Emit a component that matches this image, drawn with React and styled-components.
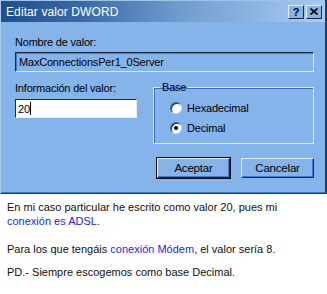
import React from "react";
import styled, { createGlobalStyle } from "styled-components";

const Global = createGlobalStyle`
  html, body { margin: 0; padding: 0; background: #ffffff; }
  body { font-family: "Liberation Sans", Arial, sans-serif; }
`;

const Page = styled.div`
  width: 327px;
  height: 294px;
  overflow: hidden;
  background: #fff;
`;

const Dialog = styled.div`
  width: 327px;
  height: 194px;
  box-sizing: border-box;
  background: #84b4ea;
  border-left: 1px solid #a9cdf5;
  border-right: 2px solid #2e3a4a;
  border-bottom: 1px solid #2e3440;
  box-shadow: inset 0 -1px 0 #3a7ad0;
  display: flex;
  flex-direction: column;
  font-family: "Liberation Sans", Arial, sans-serif;
  font-size: 11px;
  letter-spacing: -0.2px;
  color: #000;
`;

const TitleBar = styled.div`
  height: 22px;
  display: flex;
  align-items: center;
  justify-content: space-between;
  padding: 0 3px 0 5px;
  background: linear-gradient(90deg, #1d4f8e 0%, #3a6aa6 25%, #6f9ccd 55%, #a9cdf5 100%);
  border-top: 1px solid #9fc2ea;
  box-sizing: border-box;
`;

const Title = styled.span`
  color: #fff;
  font-size: 12px;
  letter-spacing: 0.1px;
`;

const TitleButtons = styled.div`
  display: flex;
  gap: 2px;
`;

const TitleBtn = styled.div`
  width: 16px;
  height: 14px;
  box-sizing: border-box;
  background: #84b4ea;
  border: 1px solid;
  border-color: #e6f0fc #1f2a38 #1f2a38 #e6f0fc;
  display: flex;
  align-items: center;
  justify-content: center;
  font-weight: bold;
  font-size: 11px;
  letter-spacing: 0;
  color: #000;
`;

const Content = styled.div`
  padding: 13px 10px 0 14px;
  display: flex;
  flex-direction: column;
`;

const Label = styled.div`
  line-height: 14px;
  height: 14px;
`;

const ReadField = styled.div`
  margin-top: 3px;
  width: 299px;
  height: 20px;
  box-sizing: border-box;
  border: 1px solid;
  border-color: #1c2c44 #dfeaf8 #dfeaf8 #1c2c44;
  box-shadow: inset 1px 1px 0 #3a7ad0;
  padding: 2px 3px;
  line-height: 14px;
  color: #000;
`;

const Row = styled.div`
  margin-top: 9px;
  display: flex;
  gap: 16px;
`;

const LeftCol = styled.div`
  display: flex;
  flex-direction: column;
`;

const InputBox = styled.div`
  margin-top: 4px;
  width: 122px;
  height: 19px;
  box-sizing: border-box;
  background: #fff;
  border: 1px solid;
  border-color: #1c2c44 #e8eef8 #e8eef8 #1c2c44;
  padding: 2px 2px;
  line-height: 14px;
  display: flex;
  align-items: center;
`;

const Caret = styled.span`
  display: inline-block;
  width: 1px;
  height: 13px;
  background: #000;
`;

const Group = styled.fieldset`
  margin: 0;
  width: 161px;
  height: 63px;
  box-sizing: border-box;
  border: 1px solid #e4eefa;
  box-shadow: inset 1px 1px 0 #2f6fc4;
  padding: 8px 0 0 0;
`;

const Legend = styled.legend`
  padding: 0 2px;
  margin-left: 6px;
  line-height: 12px;
`;

const RadioList = styled.div`
  display: flex;
  flex-direction: column;
  gap: 7px;
  padding-left: 16px;
`;

const RadioRow = styled.div`
  display: flex;
  align-items: center;
  gap: 5px;
  height: 13px;
`;

const RadioCircle = styled.span`
  width: 12px;
  height: 12px;
  box-sizing: border-box;
  border-radius: 50%;
  background: #fff;
  border: 1px solid;
  border-color: #3a5f93 #cfe0f5 #cfe0f5 #3a5f93;
  box-shadow: inset 1px 1px 0 #1c2c44;
  display: flex;
  align-items: center;
  justify-content: center;
  &::after {
    content: "";
    width: 4px;
    height: 4px;
    border-radius: 50%;
    background: ${(p) => (p.$checked ? "#000" : "transparent")};
  }
`;

const ButtonRow = styled.div`
  margin-top: 13px;
  display: flex;
  justify-content: flex-end;
  gap: 9px;
`;

const Button = styled.div`
  width: 75px;
  height: 22px;
  box-sizing: border-box;
  border: 1px solid ${(p) => (p.$default ? "#000" : "transparent")};
  display: flex;
`;

const ButtonFace = styled.div`
  flex: 1;
  border: 1px solid;
  border-color: #e6f0fc #1f2a38 #1f2a38 #e6f0fc;
  box-shadow: inset -1px -1px 0 #3a7ad0;
  display: flex;
  align-items: center;
  justify-content: center;
  font-size: 11.5px;
`;

const Article = styled.div`
  padding: 6px 7px 0 7px;
  font-family: "Liberation Sans", Arial, sans-serif;
  font-size: 11px;
  line-height: 14px;
  color: #111;
`;

const Para = styled.p`
  margin: 0 0 ${(p) => p.$gap ?? 14}px 0;
`;

const Link = styled.span`
  color: #2424f0;
`;

export default function App() {
  return (
    <Page>
      <Global />
      <Dialog>
        <TitleBar>
          <Title>Editar valor DWORD</Title>
          <TitleButtons>
            <TitleBtn>?</TitleBtn>
            <TitleBtn>
              <svg width="8" height="7" viewBox="0 0 8 7">
                <path d="M0.5 0.5 L7.5 6.5 M7.5 0.5 L0.5 6.5" stroke="#000" strokeWidth="1.6" />
              </svg>
            </TitleBtn>
          </TitleButtons>
        </TitleBar>
        <Content>
          <Label>Nombre de valor:</Label>
          <ReadField>MaxConnectionsPer1_0Server</ReadField>
          <Row>
            <LeftCol>
              <Label>Información del valor:</Label>
              <InputBox>
                20<Caret />
              </InputBox>
            </LeftCol>
            <Group>
              <Legend>Base</Legend>
              <RadioList>
                <RadioRow>
                  <RadioCircle />
                  Hexadecimal
                </RadioRow>
                <RadioRow>
                  <RadioCircle $checked />
                  Decimal
                </RadioRow>
              </RadioList>
            </Group>
          </Row>
          <ButtonRow>
            <Button $default>
              <ButtonFace>Aceptar</ButtonFace>
            </Button>
            <Button>
              <ButtonFace>Cancelar</ButtonFace>
            </Button>
          </ButtonRow>
        </Content>
      </Dialog>
      <Article>
        <Para $gap={14}>
          En mi caso particular he escrito como valor 20, pues mi <Link>conexión es ADSL</Link>.
        </Para>
        <Para $gap={9}>
          Para los que tengáis <Link>conexión Módem</Link>, el valor sería 8.
        </Para>
        <Para>PD.- Siempre escogemos como base Decimal.</Para>
      </Article>
    </Page>
  );
}
